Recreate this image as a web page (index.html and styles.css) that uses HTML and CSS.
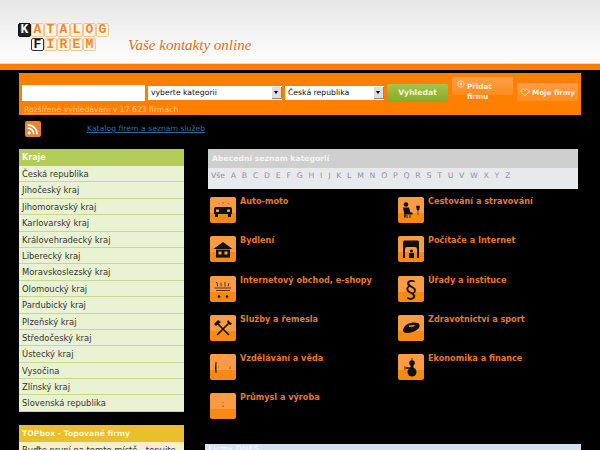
FILE: index.html
```html
<!DOCTYPE html>
<html lang="cs">

<head>
	<meta charset="utf-8">
	<title>Katalog firem</title>
	<link rel="stylesheet" href="styles.css">
</head>

<body>
	<header class="hlava">
		<div class="logo">
			<div class="logo-radek">
				<span class="pismeno tmave">K</span><span class="pismeno">A</span><span class="pismeno">T</span><span class="pismeno">A</span><span class="pismeno">L</span><span class="pismeno">O</span><span class="pismeno">G</span>
			</div>
			<div class="logo-radek druhy">
				<span class="pismeno svetle">F</span><span class="pismeno">I</span><span class="pismeno">R</span><span class="pismeno">E</span><span class="pismeno">M</span>
			</div>
		</div>
		<div class="slogan">Vaše kontakty online</div>
	</header>
	<div class="pruh"></div>

	<form class="hledani">
		<div class="hledani-radek">
			<div class="pole"></div>
			<div class="vyber kategorie">vyberte kategorii<span class="sipka"></span></div>
			<div class="vyber zeme">Česká republika<span class="sipka"></span></div>
			<div class="tlacitko">Vyhledat</div>
			<div class="pridat">
				<svg class="kolecko" viewBox="0 0 10 10" width="8" height="8"><circle cx="5" cy="5" r="4" fill="none" stroke="#fff" stroke-width="0.8"/><path d="M5 3v4M3 5h4" stroke="#fff" stroke-width="0.8"/></svg>
				<span>Přidat firmu</span>
			</div>
			<div class="moje">
				<svg viewBox="0 0 12 10" width="10" height="9"><path d="M6 9L1.500 4.800C-.2 2.600 3.800-.6 6 2.400 8.200-.6 12.200 2.600 10.500 4.800Z" fill="none" stroke="#fff" stroke-width="0.8"/></svg>
				<span>Moje firmy</span>
			</div>
		</div>
		<div class="rozsirene"><a href="#">Rozšířené vyhledávání</a> v 17 623 firmách</div>
	</form>

	<div class="lista">
		<svg class="rss" viewBox="0 0 16 16" width="16" height="16">
			<rect width="16" height="16" rx="2" fill="#e8832f"/>
			<circle cx="4.200" cy="11.800" r="1.600" fill="#fff"/>
			<path d="M2.800 7.200a6 6 0 0 1 6 6M2.800 3.800a9.400 9.400 0 0 1 9.400 9.400" fill="none" stroke="#fff" stroke-width="1.700"/>
		</svg>
		<a href="#">Katalog firem a seznam služeb</a>
	</div>

	<main class="obsah">
		<aside class="bok">
			<section class="kraje">
				<h3>Kraje</h3>
				<ul>
					<li>Česká republika</li>
					<li>Jihočeský kraj</li>
					<li>Jihomoravský kraj</li>
					<li>Karlovarský kraj</li>
					<li>Královehradecký kraj</li>
					<li>Liberecký kraj</li>
					<li>Moravskoslezský kraj</li>
					<li>Olomoucký kraj</li>
					<li>Pardubický kraj</li>
					<li>Plzeňský kraj</li>
					<li>Středočeský kraj</li>
					<li>Ústecký kraj</li>
					<li>Vysočina</li>
					<li>Zlínský kraj</li>
					<li>Slovenská republika</li>
				</ul>
			</section>
			<section class="topbox">
				<h3>TOPbox - Topované firmy</h3>
				<p>Buďte první na tomto místě - <a href="#">topujte</a></p>
			</section>
		</aside>

		<div class="hlavni">
			<section class="abeceda">
				<h3>Abecední seznam kategorií</h3>
				<div class="pismena">
					<a href="#">Vše</a><a href="#">A</a><a href="#">B</a><a href="#">C</a><a href="#">D</a><a href="#">E</a><a href="#">F</a><a href="#">G</a><a href="#">H</a><a href="#">I</a><a href="#">J</a><a href="#">K</a><a href="#">L</a><a href="#">M</a><a href="#">N</a><a href="#">O</a><a href="#">P</a><a href="#">Q</a><a href="#">R</a><a href="#">S</a><a href="#">T</a><a href="#">U</a><a href="#">V</a><a href="#">W</a><a href="#">X</a><a href="#">Y</a><a href="#">Z</a>
				</div>
			</section>

			<section class="kategorie-mrizka">
				<a class="kat" href="#">
					<span class="ikona"><svg viewBox="0 0 26 26"><path d="M9 6v1M13 5v2M18 6v1" stroke="#7a3a00" stroke-width="0.6"/><path d="M4 12q0-2 2-2h14q2 0 2 2v5H4Z" fill="#111"/><rect x="5" y="17" width="3" height="3" fill="#111"/><rect x="18" y="17" width="3" height="3" fill="#111"/><rect x="6" y="12.500" width="3" height="2.400" fill="#f8a050"/><rect x="17" y="12.500" width="3" height="2.400" fill="#f8a050"/></svg></span>
					<span>Auto-moto</span>
				</a>
				<a class="kat" href="#">
					<span class="ikona"><svg viewBox="0 0 26 26"><circle cx="8" cy="7.500" r="2.300" fill="#111"/><path d="M5 10.500h6l1.500 5h2v2H8l-.5 3H6l.3-3Z" fill="#111"/><path d="M9 18v3M12 18v3" stroke="#111" stroke-width="0.900"/><path d="M18.500 9h3l-.6 4h-1.800ZM20 13v5" fill="#111" stroke="#111" stroke-width="0.600"/></svg></span>
					<span>Cestování a stravování</span>
				</a>
				<a class="kat" href="#">
					<span class="ikona"><svg viewBox="0 0 26 26"><path d="M13 6L3.500 13H22.500Z" fill="#111"/><rect x="6" y="13.600" width="14" height="8" fill="#111"/><rect x="8.500" y="15.500" width="3" height="3" fill="#f8a050"/><rect x="14.500" y="15.500" width="3" height="3" fill="#f8a050"/></svg></span>
					<span>Bydlení</span>
				</a>
				<a class="kat" href="#">
					<span class="ikona"><svg viewBox="0 0 26 26"><path d="M5 6q0-1.500 1.500-1.500h13Q21 4.500 21 6v16h-2V13q0-2-2-2H9q-2 0-2 2v9H5Z" fill="#111"/><circle cx="13.500" cy="15" r="1.500" fill="#111"/><rect x="11" y="17" width="5" height="5" fill="#111"/></svg></span>
					<span>Počítače a Internet</span>
				</a>
				<a class="kat" href="#">
					<span class="ikona"><svg viewBox="0 0 26 26"><path d="M6 6.500h1l.6 4M11 6.500v4M15 6v4.500M19 7l-1 3.500M4.500 12H21M6 14.500H20" fill="none" stroke="#3a1a00" stroke-width="0.8"/><circle cx="9" cy="20.500" r="1.300" fill="#111"/><circle cx="17" cy="20.500" r="1.300" fill="#111"/></svg></span>
					<span>Internetový obchod, e-shopy</span>
				</a>
				<a class="kat" href="#">
					<span class="ikona"><b class="paragraf">§</b></span>
					<span>Úřady a instituce</span>
				</a>
				<a class="kat" href="#">
					<span class="ikona"><svg viewBox="0 0 26 26"><path d="M7 20L19 8M19 20L7 8" stroke="#111" stroke-width="1.700"/><path d="M4 9l4-4 3 2-5 4ZM18 5l4 4-2 1-3-3Z" fill="#111"/></svg></span>
					<span>Služby a řemesla</span>
				</a>
				<a class="kat" href="#">
					<span class="ikona"><svg viewBox="0 0 26 26"><path d="M5 15q1-5 6-6.500 5-2 10 0 1.500 3-1 5.500-5 4-11 4-4 0-4-3Z" fill="#111"/><path d="M11 10.500l6-.5-1.500 1.500-4.500.5Z" fill="#f8a050"/></svg></span>
					<span>Zdravotnictví a sport</span>
				</a>
				<a class="kat" href="#">
					<span class="ikona"><svg viewBox="0 0 26 26"><path d="M6 9q-2 5 0 9Z" fill="#111"/><path d="M6 8v11" stroke="#111" stroke-width="0.900"/><path d="M8 13h1M20 12v3" stroke="#8a4300" stroke-width="0.600"/></svg></span>
					<span>Vzdělávání a věda</span>
				</a>
				<a class="kat" href="#">
					<span class="ikona"><svg viewBox="0 0 26 26"><circle cx="14" cy="18" r="4.500" fill="#111"/><circle cx="14" cy="9" r="2.800" fill="#111"/><path d="M14 4v4M13 11h2v4h-2ZM6 13l7 1M6 15l7-1" stroke="#111" stroke-width="0.800"/></svg></span>
					<span>Ekonomika a finance</span>
				</a>
				<a class="kat" href="#">
					<span class="ikona"><svg viewBox="0 0 26 26"><path d="M13 9v.800M13 12.500v1.500" stroke="#7a3a00" stroke-width="0.800"/></svg></span>
					<span>Průmysl a výroba</span>
				</a>
			</section>

			<section class="dnes">
				<h3>Firmy DNES</h3>
			</section>
		</div>
	</main>
</body></html>
```

FILE: styles.css
```css
html,
body {
	margin: 0;
	height: 450px;
	overflow: hidden;
}

body {
	background: #000;
	font-family: "DejaVu Sans", sans-serif;
	font-size: 7.700px;
}

a {
	text-decoration: none;
}

h3 {
	margin: 0;
	font-size: 7.700px;
	font-weight: bold;
}

ul {
	margin: 0;
	padding: 0;
	list-style: none;
}

/* hlavicka */
.hlava {
	height: 63px;
	box-sizing: border-box;
	padding: 23px 0 0 18px;
	display: flex;
	background: linear-gradient(#e6e6e6, #fff);
}

.logo-radek {
	display: flex;
	height: 14.500px;
}

.logo-radek.druhy {
	margin-left: 13px;
}

.pismeno {
	width: 13px;
	height: 13.500px;
	box-sizing: border-box;
	border: 1px solid #f0c898;
	border-radius: 2px;
	background: #fdf3e4;
	color: #e98a2a;
	font: bold 13px/11.500px "Liberation Mono", monospace;
	text-align: center;
}

.pismeno.tmave {
	background: #222;
	border-color: #111;
	color: #fff;
}

.pismeno.svetle {
	background: #fff;
	border-color: #333;
	color: #111;
}

.slogan {
	margin: 14px 0 0 19px;
	color: #d9702a;
	font: italic 15px "Liberation Serif", serif;
}

.pruh {
	height: 7px;
	box-sizing: border-box;
	border-top: 1px solid #fbd9a8;
	background: #ff8000;
}

/* hledani */
.hledani {
	margin: 3px 19px 0;
	height: 42px;
	box-sizing: border-box;
	background: #ff8000;
	padding: 4px 3px 0;
}

.hledani-radek {
	display: flex;
	align-items: flex-start;
	height: 25px;
}

.pole {
	width: 123px;
	height: 16px;
	margin-top: 8px;
	background: #fff;
}

.vyber {
	position: relative;
	height: 14px;
	margin: 9px 0 0 3px;
	padding-left: 3px;
	box-sizing: border-box;
	background: #fff;
	color: #111;
	line-height: 13px;
}

.kategorie {
	width: 134px;
}

.zeme {
	width: 99px;
}

.sipka {
	position: absolute;
	right: 0;
	top: 1px;
	width: 10px;
	height: 12px;
	background: #ddd;
	border-right: 1px solid #888;
	border-bottom: 1px solid #888;
	box-sizing: border-box;
}

.sipka::after {
	content: "";
	position: absolute;
	left: 2px;
	top: 4px;
	border: 2.500px solid transparent;
	border-top: 3px solid #000;
}

.tlacitko {
	width: 61px;
	height: 18px;
	margin: 7px 0 0 3px;
	border-radius: 2px;
	background: linear-gradient(#a6c24a, #86ac22);
	color: #f4f4d8;
	font-weight: bold;
	text-align: center;
	line-height: 17px;
}

.pridat {
	width: 61px;
	height: 18px;
	margin-left: 4px;
	box-sizing: border-box;
	padding: 5px 0 0 5px;
	display: flex;
	gap: 2px;
	border-radius: 2px;
	background: linear-gradient(#fda04a, #fb8c1e);
	color: #ffeedd;
	font-size: 7.200px;
	font-weight: bold;
	line-height: 9.500px;
}

.pridat span {
	width: 40px;
}

.kolecko {
	flex: none;
	margin-top: -2px;
}

.moje {
	width: 61px;
	height: 18px;
	margin: 6px 0 0 4px;
	box-sizing: border-box;
	padding-left: 3px;
	display: flex;
	align-items: center;
	gap: 2px;
	border-radius: 2px;
	background: linear-gradient(#fda04a, #fb8c1e);
	color: #ffeedd;
	font-size: 7.200px;
	font-weight: bold;
	white-space: nowrap;
}

.moje svg {
	flex: none;
}

.rozsirene {
	margin: 2px 0 0 2px;
	color: #fcc48a;
	line-height: 11px;
}

.rozsirene a {
	color: #fcc48a;
	text-decoration: underline;
}

/* lista pod hledanim */
.lista {
	height: 34px;
	box-sizing: border-box;
	padding: 6px 0 0 25px;
	display: flex;
	align-items: flex-start;
}

.rss {
	flex: none;
}

.lista a {
	margin: 3px 0 0 46px;
	color: #2b6e9e;
	text-decoration: underline;
}

/* obsah */
.obsah {
	display: flex;
	padding-left: 19px;
}

.bok {
	width: 165px;
	flex: none;
}

.kraje h3 {
	height: 17px;
	padding-left: 3px;
	background: #b4cc5a;
	color: #f6f8e0;
	font-size: 8px;
	line-height: 17px;
}

.kraje ul {
	border-bottom: 1px solid #c8d890;
}

.kraje li {
	height: 15.400px;
	padding-left: 3px;
	border-bottom: 1px solid #c6d78e;
	background: #e9f2d2;
	color: #333;
	font-size: 8.400px;
	line-height: 16px;
}

.kraje li:last-child {
	border-bottom: none;
}

.topbox {
	margin-top: 13px;
}

.topbox h3 {
	height: 17px;
	padding-left: 3px;
	background: #e9bf2c;
	color: #fbf3d0;
	line-height: 17px;
}

.topbox p {
	margin: 0;
	padding: 3px;
	background: #f9f0c8;
	color: #333;
	font-size: 8.400px;
}

.topbox a {
	color: #2a2a90;
	text-decoration: underline;
}

.hlavni {
	width: 370px;
	margin-left: 24px;
}

.abeceda h3 {
	height: 19px;
	padding-left: 4px;
	background: #cfcfcf;
	color: #f4f4f4;
	line-height: 19px;
}

.pismena {
	height: 21px;
	padding-left: 3px;
	display: flex;
	gap: 5.800px;
	background: #e8e9ea;
	line-height: 16px;
}

.pismena a {
	color: #8a93a8;
}

.kategorie-mrizka {
	margin: 8px 0 0 2px;
	display: grid;
	grid-template-columns: 188px 1fr;
	grid-auto-rows: 39.300px;
}

.kat {
	display: flex;
	gap: 4px;
	color: #e07a2e;
	font-size: 8.150px;
	font-weight: bold;
	line-height: 8px;
}

.ikona {
	flex: none;
	width: 26px;
	height: 26px;
	display: block;
	border-radius: 2px;
	background: linear-gradient(#fb9c45 60%, #f78a12 60%);
	overflow: hidden;
}

.ikona svg {
	display: block;
	width: 26px;
	height: 26px;
}

.paragraf {
	display: block;
	color: #111;
	font: 23px/26px "DejaVu Sans", sans-serif;
	text-align: center;
}

.dnes {
	margin: 11px 0 0 -3px;
	width: 376px;
}

.dnes h3 {
	height: 20px;
	padding-left: 3px;
	background: #d2e0f0;
	color: #f0f4fa;
	line-height: 10px;
}
```
